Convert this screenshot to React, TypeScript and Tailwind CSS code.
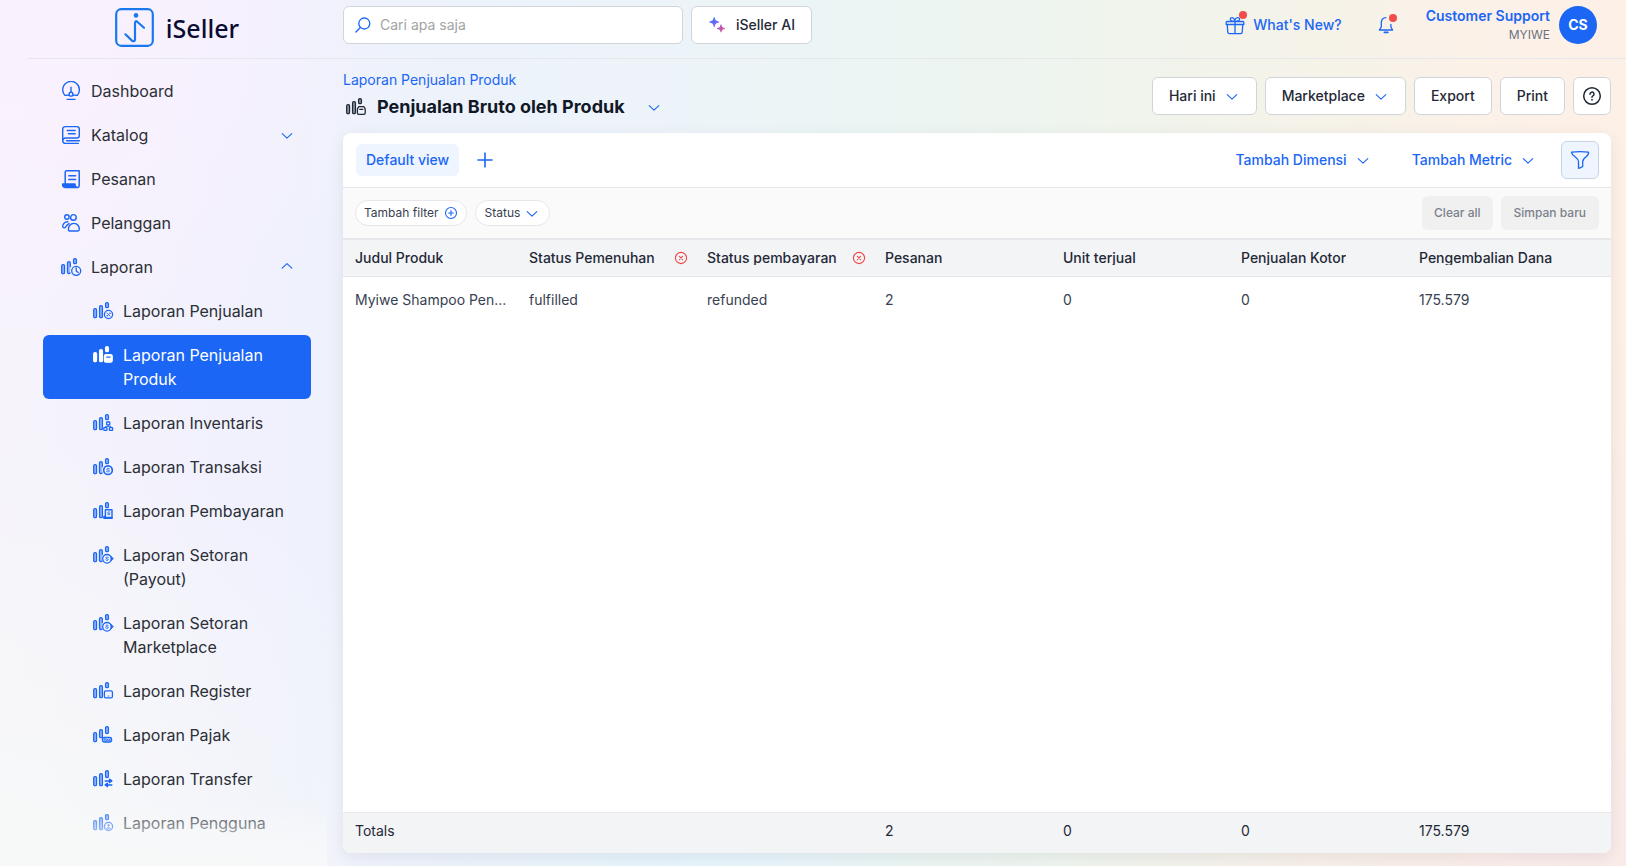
import type { ReactNode } from "react";
import { clsx } from "clsx";

const INTER = "font-['Inter',sans-serif]";

// ── Icons ────────────────────────────────────────────────────────────────

function Chevron({ up = false, className }: { up?: boolean; className?: string }) {
  return (
    <svg viewBox="0 0 12 8" className={clsx("h-2 w-3 shrink-0", className)} fill="none" stroke="currentColor" strokeWidth="1.1" strokeLinecap="round" strokeLinejoin="round">
      <path d={up ? "M1.2 5.2 6 .7l4.8 4.500" : "M1.2 2.600 6 7.100l4.800-4.500"} />
    </svg>
  );
}

type Badge =
  | "clock"
  | "percent"
  | "box"
  | "nodes"
  | "coin"
  | "bill"
  | "payout"
  | "register"
  | "tax"
  | "transfer"
  | "user";

// Lower right mark of each report icon
const BADGES: Record<Badge, ReactNode> = {
  clock: (
    <>
      <circle cx="15.2" cy="12.8" r="4.5" />
      <path d="M15.2 10v3l2 1.6" />
    </>
  ),
  percent: (
    <>
      <circle cx="15.5" cy="12.5" r="4.1" />
      <path d="m13.9 11 3.2 3.1" strokeWidth=".9" />
      <circle cx="16.9" cy="11.3" r=".5" strokeWidth=".6" />
      <circle cx="14.2" cy="13.8" r=".5" strokeWidth=".6" />
    </>
  ),
  box: (
    <>
      <path d="M12.8 8.6h5l1.4 2.200v4.2a1.3 1.3 0 0 1-1.3 1.3h-5.200a1.3 1.3 0 0 1-1.3-1.3v-4.200z" />
      <path d="M13.800 11.300h3" />
    </>
  ),
  nodes: (
    <>
      <rect x="13.6" y="8" width="3.2" height="2.8" rx=".6" />
      <rect x="10.8" y="13.6" width="3.2" height="2.8" rx=".6" />
      <rect x="16.4" y="13.6" width="3.2" height="2.8" rx=".6" />
      <path d="M15.2 11v1.400M12.400 13.600v-1.200H18v1.200" strokeWidth=".9" />
    </>
  ),
  coin: (
    <>
      <circle cx="15" cy="12.2" r="4.300" strokeWidth="1.700" />
      <path d="M16.500 10.800c-.8-.7-2.800-.5-2.800.5 0 1.200 2.800.6 2.800 1.800 0 1-2.100 1.200-3 .4" strokeWidth=".9" />
    </>
  ),
  bill: (
    <>
      <path d="M12.400 7.800h6.600v8.400h-8v-1.800h1.400z" strokeWidth="1.400" />
      <path d="M17 10.100c-.7-.6-2.300-.4-2.300.4 0 1 2.300.5 2.300 1.500 0 .8-1.800 1-2.500.3" strokeWidth=".9" />
      <path d="M11 15.600h7.800" strokeWidth="1.800" />
    </>
  ),
  payout: (
    <>
      <circle cx="14" cy="12.800" r="4.300" />
      <path d="M15.300 11.400c-.7-.6-2.500-.4-2.500.5 0 1.100 2.500.6 2.500 1.700 0 .9-1.900 1.100-2.700.3" strokeWidth=".9" />
      <path d="M18.200 10.800v4l2-2z" fill="currentColor" strokeWidth=".8" />
    </>
  ),
  register: (
    <>
      <rect x="11.400" y="8.800" width="8" height="7" rx="1.400" />
      <path d="M15 14h1" strokeWidth=".8" />
    </>
  ),
  tax: (
    <>
      <rect x="9.400" y="11.400" width="9.200" height="4.600" rx="1.800" fill="currentColor" fillOpacity=".35" />
      <path d="M11 13h1.800m-.9 0v1.600m1.500 0 .8-1.600.8 1.600m.9-1.600 1.200 1.600m0-1.600-1.200 1.600" strokeWidth=".7" />
    </>
  ),
  transfer: (
    <>
      <path d="M12.200 10.900h4.600M16.600 9.300l2.200 1.600-2.200 1.600z" fill="currentColor" strokeWidth="1.500" />
      <path d="M18.800 14.900h-4.600M14.400 13.300l-2.200 1.600 2.200 1.600z" fill="currentColor" strokeWidth="1.500" />
    </>
  ),
  user: (
    <>
      <circle cx="15.500" cy="12.500" r="4.100" />
      <circle cx="15.500" cy="11.300" r=".8" strokeWidth=".9" />
      <path d="M13.700 14.600c.3-1.700 3.300-1.700 3.600 0z" strokeWidth=".9" />
    </>
  ),
};

function ReportIcon({ badge, solid = false }: { badge: Badge; solid?: boolean }) {
  const longThird = badge === "transfer" || badge === "tax";
  const shortSecond = badge === "coin" || badge === "payout" || badge === "clock";
  return (
    <svg viewBox="0 0 20 18" className="h-[18px] w-5 shrink-0 overflow-visible" fill="none" stroke="currentColor" strokeWidth="1.3" strokeLinecap="round" strokeLinejoin="round">
      <g fill="currentColor" fillOpacity={solid ? 1 : 0.4}>
        <rect x=".7" y="6.700" width="2.800" height="9" rx="1.200" />
        {shortSecond ? (
          <path d="M9.300 8.600V5.100a1.400 1.400 0 0 0-2.800 0v9.200a1.400 1.400 0 0 0 2.600.7" />
        ) : (
          <rect x="6.600" y="3.700" width="2.800" height={badge === "tax" ? 8 : 12} rx="1.200" />
        )}
        <rect x="12.600" y=".7" width="2.800" height={longThird ? 6.8 : 5} rx="1.200" />
      </g>
      {solid ? (
        <>
          <rect x="11.400" y="8.600" width="7.800" height="7.600" rx="1.600" fill="currentColor" />
          <path d="M13.800 11.200h3.200" stroke="#1b66f5" strokeWidth="1.300" />
        </>
      ) : (
        BADGES[badge]
      )}
    </svg>
  );
}

function DashboardIcon() {
  return (
    <svg viewBox="0 0 20 20" className="size-5" fill="none" stroke="currentColor" strokeWidth="1.4" strokeLinecap="round">
      <path d="M7.500 14.200c-1.500-.3-2.300.5-3.600.1A8.300 8.300 0 1 1 18.300 9.600c0 1.900-.8 3.600-1.900 4.700-1.300.2-2.400-.4-3.900-.1" />
      <circle cx="10" cy="13.200" r="1.900" />
      <path d="M10 6.200v5M6.200 18.400h7.800" />
    </svg>
  );
}

function CatalogIcon() {
  return (
    <svg viewBox="0 0 20 20" className="size-5" fill="none" stroke="currentColor" strokeWidth="1.400" strokeLinecap="round" strokeLinejoin="round">
      <path d="M1.700 15.800V4.200a2.600 2.600 0 0 1 2.600-2.600h11.400a2.600 2.600 0 0 1 2.600 2.600v6.200a2.600 2.600 0 0 1-2.600 2.600H4.500a2.700 2.700 0 0 0 0 5.400h12.800" />
      <path d="M5.600 15.700h12.700" strokeWidth="1.600" />
      <path d="M6.200 5.500h8M7.400 8.800h6.800" />
    </svg>
  );
}

function OrdersIcon() {
  return (
    <svg viewBox="0 0 20 20" className="size-5" fill="none" stroke="currentColor" strokeWidth="1.500" strokeLinecap="round" strokeLinejoin="round">
      <path d="M4.200 14.800V3.200a1.500 1.500 0 0 1 1.500-1.500h12.500v15a1.700 1.700 0 0 1-1.700 1.700" />
      <path d="M1.700 15h12.200c0 1.800.6 3.400 2.400 3.400H4a2.300 2.300 0 0 1-2.300-2.300z" fill="currentColor" />
      <path d="M7.800 6.700h6.800M7.800 10.500h6.800" />
    </svg>
  );
}

function CustomersIcon() {
  return (
    <svg viewBox="0 0 20 20" className="size-5" fill="none" stroke="currentColor" strokeWidth="1.400" strokeLinecap="round" strokeLinejoin="round">
      <circle cx="5.900" cy="4" r="2.200" />
      <circle cx="12.400" cy="4.400" r="2.800" />
      <path d="M7.400 16.600c-.2-3.200 2-6.200 5.500-6.200s5.600 3 5.400 6.200c0 .8-.8 1.400-1.600 1.400H9a1.500 1.500 0 0 1-1.600-1.400z" />
      <path d="M6.800 8.800C3.600 8.600 1.700 11 1.700 13.600c0 1.500 2.300 1.700 3 .3.800-1.700 2-2.500 3.300-3.400" />
    </svg>
  );
}

function SearchIcon() {
  return (
    <svg viewBox="0 0 16 16" className="size-4 shrink-0" fill="none" stroke="currentColor" strokeWidth="1.300" strokeLinecap="round">
      <circle cx="9.300" cy="6.500" r="5.500" />
      <path d="M5.400 10.500.9 15" />
    </svg>
  );
}

function SparkleIcon() {
  return (
    <svg viewBox="0 0 18 18" className="size-[18px]">
      <defs>
        <linearGradient id="spark" x1="0" y1="0" x2="1" y2="1">
          <stop offset=".1" stopColor="#2f7cf8" />
          <stop offset=".5" stopColor="#8a5cf0" />
          <stop offset=".95" stopColor="#f2557a" />
        </linearGradient>
      </defs>
      <path
        fill="url(#spark)"
        d="M6.200.8c.5 0 .8 2.600 1.500 3.400.8.800 3.700 1.200 3.700 1.800s-2.900 1-3.700 1.800c-.7.800-1 3.600-1.500 3.600s-.8-2.800-1.500-3.600C3.900 7 1 6.600 1 6s2.900-1 3.700-1.800C5.400 3.400 5.700.8 6.200.8ZM13 8.300c.5 0 .7 2 1.300 2.600.6.600 2.700.9 2.700 1.500s-2.100.9-2.700 1.500c-.6.600-.8 2.600-1.300 2.600s-.7-2-1.300-2.600c-.6-.6-2.700-.9-2.700-1.500s2.100-.9 2.700-1.500c.6-.6.8-2.600 1.300-2.600Z"
      />
    </svg>
  );
}

function GiftIcon() {
  return (
    <svg viewBox="0 0 20 20" className="size-5" fill="none" stroke="currentColor" strokeWidth="1.300" strokeLinecap="round" strokeLinejoin="round">
      <path d="M2 6.500h16a.8.8 0 0 1 .8.800v2.200H1.200V7.300a.8.8 0 0 1 .8-.8ZM2.200 9.500l.6 7.700a1.500 1.500 0 0 0 1.500 1.400h11.400a1.500 1.500 0 0 0 1.500-1.400l.6-7.700M10 6.500v12" />
      <path d="M9.600 6.300C6.700 6.500 5.300 5.600 5.300 4.100c0-2 3.600-2.400 4.500 1.200.8-3.600 4.800-3.200 4.800-1.200 0 1.500-1.500 2.400-4.600 2.200" />
    </svg>
  );
}

function BellIcon() {
  return (
    <svg viewBox="0 0 16 18" className="h-[18px] w-4" fill="none" stroke="currentColor" strokeWidth="1.300" strokeLinecap="round" strokeLinejoin="round">
      <path d="M7.900 1.600C5 1.600 3.300 3.700 3.300 6.300v4.500L1.400 14h13.200l-1.700-3V8.500" />
      <path d="M6.300 16.400h3.600" strokeWidth="1.600" />
    </svg>
  );
}

function HelpIcon() {
  return (
    <svg viewBox="0 0 20 20" className="size-5" fill="none" stroke="currentColor" strokeWidth="1.500" strokeLinecap="round" strokeLinejoin="round">
      <circle cx="10" cy="10" r="8.300" />
      <path d="M8 8.200a2 2 0 1 1 2.900 1.700c-.6.300-.9.700-.9 1.300" />
      <path d="M10 13.700v.1" strokeWidth="1.700" />
    </svg>
  );
}

function FunnelIcon() {
  return (
    <svg viewBox="0 0 20 20" className="size-5" fill="none" stroke="currentColor" strokeWidth="1.300" strokeLinejoin="round">
      <path d="M1.500 2.200c5.700-.9 11.300-.9 17 0 .3 1.800-.6 3.300-2.300 4.600-2 1.500-3.500 2.600-3.500 4.600v5.200c-1.200 1-2.600 1.600-4.200 1.700v-6.900c0-2-1.500-3.100-3.400-4.600C3.200 5.500 1.600 4.200 1.500 2.200Z" />
    </svg>
  );
}

function CirclePlusIcon() {
  return (
    <svg viewBox="0 0 14 14" className="size-3.5 text-[#1b66f5]" fill="none" stroke="currentColor" strokeWidth="1.100" strokeLinecap="round">
      <circle cx="7" cy="7" r="5.500" />
      <path d="M7 4.600v4.800M4.600 7h4.800" />
    </svg>
  );
}

function CircleXIcon() {
  return (
    <svg viewBox="0 0 14 14" className="size-3.5" fill="none" stroke="currentColor" strokeWidth="1.100" strokeLinecap="round">
      <circle cx="7" cy="7" r="5.600" />
      <path d="m5.400 5.400 3.200 3.200M8.600 5.400 5.400 8.600" />
    </svg>
  );
}

function LogoMark() {
  return (
    <svg viewBox="0 0 39 39" className="size-[39px]" fill="none" stroke="#1a78ee" strokeWidth="2.200" strokeLinecap="round" strokeLinejoin="round">
      <rect x="1.200" y="1.200" width="36.600" height="36.600" rx="5" />
      <path d="M10.400 26.300l6.600 6.300c1.400 1.200 3 .7 3-1.200V15.200c0-2 1-2.500 2.200-1.400l6.800 6" />
      <circle cx="21" cy="7.400" r="2.300" fill="#1a78ee" stroke="none" />
    </svg>
  );
}

// ── Data ─────────────────────────────────────────────────────────────────

const MENU: { label: string; icon: ReactNode; open?: boolean }[] = [
  { label: "Dashboard", icon: <DashboardIcon /> },
  { label: "Katalog", icon: <CatalogIcon />, open: false },
  { label: "Pesanan", icon: <OrdersIcon /> },
  { label: "Pelanggan", icon: <CustomersIcon /> },
  { label: "Laporan", icon: <ReportIcon badge="clock" />, open: true },
];

const REPORTS: { label: string; badge: Badge; active?: boolean }[] = [
  { label: "Laporan Penjualan", badge: "percent" },
  { label: "Laporan Penjualan Produk", badge: "box", active: true },
  { label: "Laporan Inventaris", badge: "nodes" },
  { label: "Laporan Transaksi", badge: "coin" },
  { label: "Laporan Pembayaran", badge: "bill" },
  { label: "Laporan Setoran (Payout)", badge: "payout" },
  { label: "Laporan Setoran Marketplace", badge: "payout" },
  { label: "Laporan Register", badge: "register" },
  { label: "Laporan Pajak", badge: "tax" },
  { label: "Laporan Transfer", badge: "transfer" },
  { label: "Laporan Pengguna", badge: "user" },
];

const COLUMNS: { label: string; removable?: boolean }[] = [
  { label: "Judul Produk" },
  { label: "Status Pemenuhan", removable: true },
  { label: "Status pembayaran", removable: true },
  { label: "Pesanan" },
  { label: "Unit terjual" },
  { label: "Penjualan Kotor" },
  { label: "Pengembalian Dana" },
];

const ROWS = [["Myiwe Shampoo Pen...", "fulfilled", "refunded", "2", "0", "0", "175.579"]];
const TOTALS = ["Totals", "", "", "2", "0", "0", "175.579"];

const ROW_GRID = "grid grid-cols-[174px_repeat(6,minmax(178px,1fr))] pr-[26px]";

// ── Layout ───────────────────────────────────────────────────────────────

function Header() {
  return (
    <header className="ml-[27px] flex h-[59px] shrink-0 items-start border-b border-[#e5e7eb]">
      <a href="#" className="flex w-[300px] shrink-0 items-center justify-center gap-3 pt-2" aria-label="iSeller">
        <LogoMark />
        <span className="font-['Noto_Sans',sans-serif] text-[25px] leading-[38px] font-medium text-[#0b0b33]">iSeller</span>
      </a>
      <div className="flex flex-1 items-center gap-2 pt-1.5 pr-[29px] pl-4">
        <label className="flex h-[38px] w-[340px] items-center gap-[9px] rounded-md border border-[#d1d5db] bg-white px-[11px] text-[#1b66f5]">
          <SearchIcon />
          <input type="search" aria-label="Cari apa saja" placeholder="Cari apa saja" className="w-full bg-transparent text-sm outline-none placeholder:text-[#a3a3a3]" />
        </label>
        <button type="button" className="flex h-[38px] items-center gap-2.5 rounded-md border border-[#d1d5db] bg-white px-4 text-sm font-medium text-[#1f2937]">
          <SparkleIcon />
          iSeller AI
        </button>
        <div className="ml-auto flex items-center text-[#1b66f5]">
          <button type="button" className="relative flex items-center gap-2 text-sm font-medium">
            <GiftIcon />
            What's New?
            <span className="absolute -top-1 left-3.5 size-2 rounded-full bg-[#f24b4b]" />
          </button>
          <button type="button" className="relative ml-9" aria-label="Notifikasi">
            <BellIcon />
            <span className="absolute -top-0.5 left-[11px] size-2 rounded-full bg-[#f24b4b]" />
          </button>
          <button type="button" className="ml-8 flex items-center gap-[9px]">
            <span className="text-right">
              <span className="block text-sm leading-5 font-semibold">Customer Support</span>
              <span className="block text-xs leading-[18px] text-[#6b7280]">MYIWE</span>
            </span>
            <span className="flex size-[38px] items-center justify-center rounded-full bg-[#1b66f5] text-sm font-bold text-white">CS</span>
          </button>
        </div>
      </div>
    </header>
  );
}

function Sidebar() {
  return (
    <aside className="relative ml-[27px] w-[300px] shrink-0 overflow-hidden px-4 pt-3 text-base text-[#2b2f36]">
      <nav aria-label="Menu utama">
        <ul className="flex flex-col gap-1">
          {MENU.map((item) => (
            <li key={item.label}>
              <a href="#" className="flex h-10 items-center gap-2.5 pr-[18px] pl-[18px]">
                <span className="w-5 text-[#1b66f5]">{item.icon}</span>
                {item.label}
                {item.open !== undefined && <Chevron up={item.open} className="ml-auto text-[#1b66f5]" />}
              </a>
            </li>
          ))}
          {REPORTS.map((item) => (
            <li key={item.label}>
              <a
                href="#"
                className={clsx(
                  "flex gap-2.5 rounded-md py-2 pr-5 pl-[50px] leading-6",
                  item.active && "bg-[#1b66f5] text-white",
                )}
              >
                <span className={clsx("flex h-6 items-center", !item.active && "text-[#1b66f5]")}>
                  <ReportIcon badge={item.badge} solid={item.active} />
                </span>
                {item.label}
              </a>
            </li>
          ))}
        </ul>
      </nav>
      {/* Fade over the last entries of the scrolling menu */}
      <div className="pointer-events-none absolute inset-x-0 bottom-0 h-16 bg-linear-to-t from-[#f7f9f9] via-[#f7f9f9]/60 to-transparent" />
    </aside>
  );
}

function ActionButton({ children, menu = false }: { children: ReactNode; menu?: boolean }) {
  return (
    <button type="button" className="flex h-[38px] items-center gap-2.5 rounded-md border border-[#d1d5db] bg-white px-4 text-sm font-medium text-[#1f2937]">
      {children}
      {menu && <Chevron className="mr-0.5 text-[#1b66f5]" />}
    </button>
  );
}

function PageTitle() {
  return (
    <div className="flex items-start justify-between">
      <div className="pt-[11px]">
        <a href="#" className="block text-sm leading-5 text-[#1b66f5]">
          Laporan Penjualan Produk
        </a>
        <div className="flex h-8 items-center gap-[11px] pt-px pl-[3px] text-[#1f2937]">
          <ReportIcon badge="box" />
          <h1 className="text-lg leading-7 font-bold text-[#111827]">Penjualan Bruto oleh Produk</h1>
          <button type="button" aria-label="Pilih laporan" className="ml-3 text-[#1b66f5]">
            <Chevron />
          </button>
        </div>
      </div>
      <div className="flex gap-2 pt-[18px]">
        <ActionButton menu>Hari ini</ActionButton>
        <ActionButton menu>Marketplace</ActionButton>
        <ActionButton>Export</ActionButton>
        <ActionButton>Print</ActionButton>
        <button type="button" aria-label="Bantuan" className="flex size-[38px] items-center justify-center rounded-md border border-[#d1d5db] bg-white text-[#1f2937]">
          <HelpIcon />
        </button>
      </div>
    </div>
  );
}

function ViewBar() {
  return (
    <div className="flex h-[55px] shrink-0 items-center border-b border-[#e5e7eb] px-3 text-sm font-medium text-[#1b66f5]">
      <button type="button" className="ml-px h-8 rounded-md bg-[#eef5ff] px-2.5">
        Default view
      </button>
      <button type="button" aria-label="Tambah view" className="ml-[18px]">
        <svg viewBox="0 0 16 16" className="size-4" stroke="currentColor" strokeWidth="1.600" strokeLinecap="round">
          <path d="M8 1v14M1 8h14" />
        </svg>
      </button>
      <button type="button" className="ml-auto flex items-center gap-2.5">
        Tambah Dimensi
        <Chevron />
      </button>
      <button type="button" className="ml-[43px] flex items-center gap-2.5">
        Tambah Metric
        <Chevron />
      </button>
      <button type="button" aria-label="Filter" className="ml-[27px] flex size-[38px] items-center justify-center rounded-md border border-[#c7d2e2] bg-[#eef5ff]">
        <FunnelIcon />
      </button>
    </div>
  );
}

function FilterBar() {
  return (
    <div className="flex h-[52px] shrink-0 items-center gap-2 border-b-2 border-[#e5e7eb] bg-[#fafafa] px-3 text-xs">
      <button type="button" className="flex h-[26px] items-center gap-[5px] rounded-full border border-[#e5e7eb] bg-white px-2 text-[#374151]">
        Tambah filter
        <CirclePlusIcon />
      </button>
      <button type="button" className="flex h-[26px] items-center gap-1.5 rounded-full border border-[#e5e7eb] bg-white pr-[11px] pl-[9px] text-[#374151]">
        Status
        <Chevron className="text-[#1b66f5]" />
      </button>
      <button type="button" className="ml-auto h-[34px] rounded-md bg-[#f0f0f0] px-3 font-medium text-[#7b818c]">
        Clear all
      </button>
      <button type="button" className="h-[34px] rounded-md bg-[#f0f0f0] px-[13px] font-medium text-[#7b818c]">
        Simpan baru
      </button>
    </div>
  );
}

function ReportTable() {
  return (
    <table className="flex min-h-0 flex-1 flex-col text-sm text-[#1f2937]">
      <thead className="block border-b border-[#e5e7eb] bg-[#f3f4f6]">
        <tr className={clsx(ROW_GRID, "h-9 items-center")}>
          {COLUMNS.map((col) => (
            <th key={col.label} scope="col" className="flex items-center justify-between pr-[7px] pl-3 text-left font-medium">
              <span className="overflow-hidden leading-none whitespace-nowrap">{col.label}</span>
              {col.removable && (
                <button type="button" aria-label={`Hapus ${col.label}`} className="text-[#f04444]">
                  <CircleXIcon />
                </button>
              )}
            </th>
          ))}
        </tr>
      </thead>
      <tbody className="block flex-1 overflow-auto text-[#374151]">
        {ROWS.map((row) => (
          <tr key={row[0]} className={clsx(ROW_GRID, "h-[46px] items-center")}>
            {row.map((cell, i) => (
              <td key={i} className="truncate pr-2 pl-3">
                {cell}
              </td>
            ))}
          </tr>
        ))}
      </tbody>
      <tfoot className="block border-t border-[#e5e7eb] bg-[#f3f4f6]">
        <tr className={clsx(ROW_GRID, "h-10 items-center pb-1")}>
          {TOTALS.map((cell, i) => (
            <td key={i} className="px-3">
              {cell}
            </td>
          ))}
        </tr>
      </tfoot>
    </table>
  );
}

export default function App() {
  return (
    <div
      className={clsx(
        INTER,
        "flex h-screen min-h-[600px] flex-col overflow-hidden",
        "bg-[radial-gradient(circle_at_0%_0%,#fbf1fe_0%,transparent_22%),radial-gradient(circle_at_0%_100%,#f7f9f8_0%,transparent_24%),radial-gradient(circle_at_42%_100%,#e6f4fb_0%,transparent_20%),radial-gradient(circle_at_100%_100%,#f9ebe8_0%,transparent_30%),linear-gradient(90deg,#f6f3fb_0%,#f1f1fd_14%,#edf2fb_25%,#edf4f9_42%,#ebf5f3_54%,#f0f4ec_70%,#f7f2e8_84%,#fcf1e8_93%,#fdf0e6_100%)]",
      )}
    >
      <Header />
      <div className="flex min-h-0 flex-1">
        <Sidebar />
        <main className="flex min-w-0 flex-1 flex-col pr-[15px] pb-[13px] pl-4">
          <PageTitle />
          <section className="mt-[11px] flex min-h-0 flex-1 flex-col overflow-hidden rounded-lg bg-white shadow-[0_4px_16px_rgba(30,30,60,0.08)]">
            <ViewBar />
            <FilterBar />
            <ReportTable />
          </section>
        </main>
      </div>
    </div>
  );
}
